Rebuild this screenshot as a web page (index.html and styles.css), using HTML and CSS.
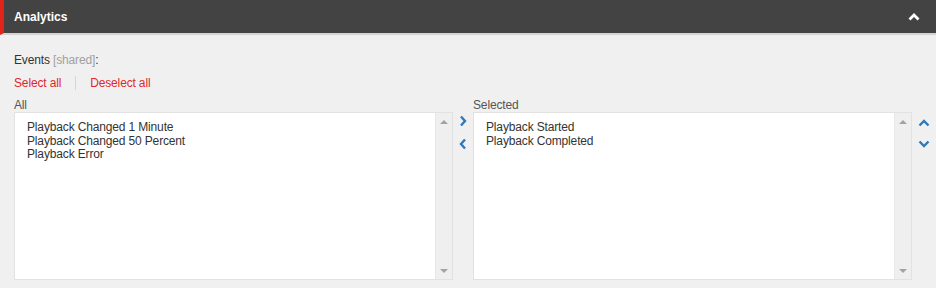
FILE: index.html
```html
<!DOCTYPE html>
<html lang="en">
<head>
  <meta charset="UTF-8" />
  <title>Analytics</title>
  <link rel="stylesheet" href="styles.css">
</head>
<body>
  <header class="panel-head">
    <h1>Analytics</h1>
    <svg class="collapse" width="12" height="8" viewBox="0 0 12 8"><path d="M1.5 6.5 L6 2 L10.5 6.5" fill="none" stroke="#fff" stroke-width="2.8"/></svg>
  </header>

  <section class="panel-body">
    <div class="field-label">Events <span class="muted">[shared]</span>:</div>
    <div class="links">
      <a href="#">Select all</a>
      <span class="sep"></span>
      <a href="#">Deselect all</a>
    </div>

    <div class="picker">
      <div class="col">
        <div class="col-label">All</div>
        <div class="listbox">
          <ul>
            <li>Playback Changed 1 Minute</li>
            <li>Playback Changed 50 Percent</li>
            <li>Playback Error</li>
          </ul>
          <div class="scroll">
            <span class="tri up"></span>
            <span class="tri down"></span>
          </div>
        </div>
      </div>

      <div class="moves">
        <svg width="8" height="12" viewBox="0 0 8 12"><path d="M2 1.5 L6 6 L2 10.5" fill="none" stroke="#2f78bd" stroke-width="2.4"/></svg>
        <svg width="8" height="12" viewBox="0 0 8 12"><path d="M6 1.5 L2 6 L6 10.5" fill="none" stroke="#2f78bd" stroke-width="2.4"/></svg>
      </div>

      <div class="col">
        <div class="col-label">Selected</div>
        <div class="listbox">
          <ul>
            <li>Playback Started</li>
            <li>Playback Completed</li>
          </ul>
          <div class="scroll">
            <span class="tri up"></span>
            <span class="tri down"></span>
          </div>
        </div>
      </div>

      <div class="order">
        <svg width="12" height="8" viewBox="0 0 12 8"><path d="M1.5 6.5 L6 2 L10.5 6.5" fill="none" stroke="#2f78bd" stroke-width="2.4"/></svg>
        <svg width="12" height="8" viewBox="0 0 12 8"><path d="M1.5 1.5 L6 6 L10.5 1.5" fill="none" stroke="#2f78bd" stroke-width="2.4"/></svg>
      </div>
    </div>
  </section>
</body>
</html>
```

FILE: styles.css
```css
body {
  margin: 0;
  background: #f0f0f0;
  font-family: "Liberation Sans", Arial, sans-serif;
  font-size: 12px;
  letter-spacing: -0.15px;
  color: #333;
}
.panel-head {
  height: 33px;
  background: #434343;
  border-left: 4px solid #e2231a;
  border-bottom: 2px solid #d4d4d4;
  display: flex;
  align-items: center;
  justify-content: space-between;
  padding: 0 16px 0 10px;
}
.panel-head h1 {
  margin: 0;
  font-size: 12px;
  font-weight: bold;
  letter-spacing: 0;
  color: #fff;
}
.collapse {
  margin-top: 1px;
}
.panel-body {
  padding: 18px 0 0 14px;
}
.field-label {
  line-height: 14px;
}
.muted {
  color: #a0a0a0;
}
.links {
  display: flex;
  align-items: center;
  margin-top: 9px;
  line-height: 14px;
}
.links a {
  color: #e2262e;
  text-decoration: none;
}
.sep {
  width: 1px;
  height: 14px;
  background: #d6d6d6;
  margin: 0 14px 0 14px;
}
.picker {
  display: flex;
  margin-top: 8px;
}
.col {
  width: 439px;
}
.col-label {
  color: #555;
  line-height: 14px;
}
.listbox {
  height: 166px;
  background: #fff;
  border: 1px solid #e2e2e2;
  display: flex;
}
.listbox ul {
  flex: 1;
  list-style: none;
  margin: 0;
  padding: 8px 11px 8px 12px;
}
.listbox li {
  line-height: 13.5px;
  color: #333;
}
.scroll {
  width: 16px;
  background: #efefef;
  border-left: 1px solid #e8e8e8;
  display: flex;
  flex-direction: column;
  justify-content: space-between;
  align-items: center;
  padding: 7px 0 6px;
}
.tri {
  width: 0;
  height: 0;
  border-left: 4px solid transparent;
  border-right: 4px solid transparent;
}
.tri.up {
  border-bottom: 4px solid #a3a3a3;
}
.tri.down {
  border-top: 4px solid #a3a3a3;
}
.moves {
  width: 20px;
  display: flex;
  flex-direction: column;
  align-items: center;
  gap: 11px;
  padding-top: 17px;
}
.order {
  width: 24px;
  display: flex;
  flex-direction: column;
  align-items: center;
  gap: 13px;
  padding-top: 21px;
}
```
